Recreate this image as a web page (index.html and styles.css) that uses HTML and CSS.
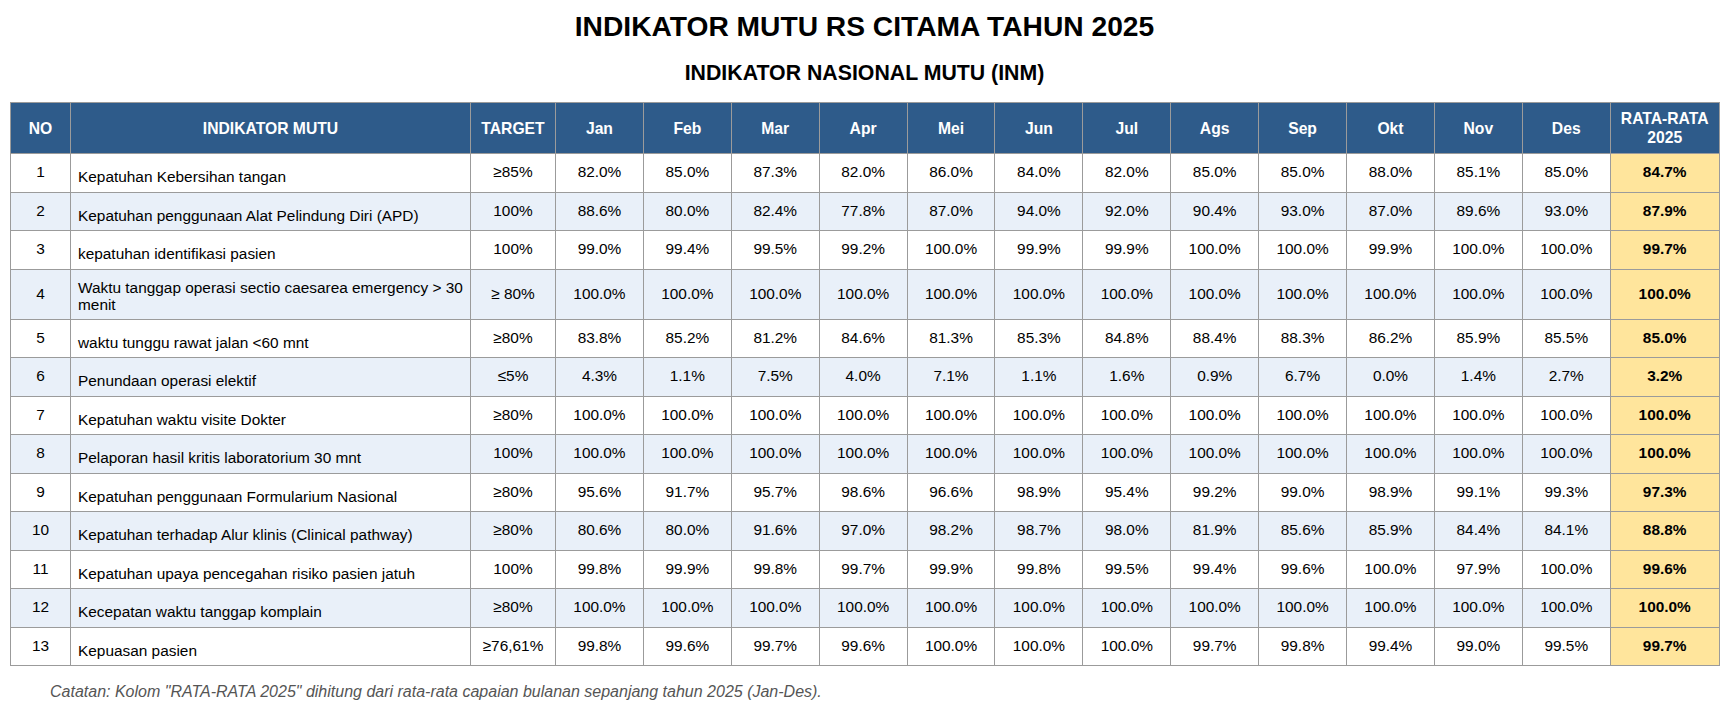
FILE: index.html
```html
<!DOCTYPE html>
<html lang="id">
<head>
<meta charset="utf-8">
<title>Indikator Mutu RS Citama Tahun 2025</title>
<link rel="stylesheet" href="styles.css">
</head>
<body>
<div class="page">
  <h1 class="title">INDIKATOR MUTU RS CITAMA TAHUN 2025</h1>
  <h2 class="subtitle">INDIKATOR NASIONAL MUTU (INM)</h2>
  <table class="grid">
    <colgroup>
      <col class="c-no"><col class="c-ind"><col class="c-tgt">
      <col class="c-m"><col class="c-m"><col class="c-m"><col class="c-m"><col class="c-m"><col class="c-m">
      <col class="c-m"><col class="c-m"><col class="c-m"><col class="c-m"><col class="c-m"><col class="c-m">
      <col class="c-avg">
    </colgroup>
    <thead>
      <tr>
        <th>NO</th><th>INDIKATOR MUTU</th><th>TARGET</th>
        <th>Jan</th><th>Feb</th><th>Mar</th><th>Apr</th><th>Mei</th><th>Jun</th>
        <th>Jul</th><th>Ags</th><th>Sep</th><th>Okt</th><th>Nov</th><th>Des</th>
        <th>RATA-RATA<br>2025</th>
      </tr>
    </thead>
    <tbody>
      <tr><td>1</td><td class="ind">Kepatuhan Kebersihan tangan</td><td>≥85%</td><td>82.0%</td><td>85.0%</td><td>87.3%</td><td>82.0%</td><td>86.0%</td><td>84.0%</td><td>82.0%</td><td>85.0%</td><td>85.0%</td><td>88.0%</td><td>85.1%</td><td>85.0%</td><td class="avg">84.7%</td></tr>
      <tr><td>2</td><td class="ind">Kepatuhan penggunaan Alat Pelindung Diri (APD)</td><td>100%</td><td>88.6%</td><td>80.0%</td><td>82.4%</td><td>77.8%</td><td>87.0%</td><td>94.0%</td><td>92.0%</td><td>90.4%</td><td>93.0%</td><td>87.0%</td><td>89.6%</td><td>93.0%</td><td class="avg">87.9%</td></tr>
      <tr><td>3</td><td class="ind">kepatuhan identifikasi pasien</td><td>100%</td><td>99.0%</td><td>99.4%</td><td>99.5%</td><td>99.2%</td><td>100.0%</td><td>99.9%</td><td>99.9%</td><td>100.0%</td><td>100.0%</td><td>99.9%</td><td>100.0%</td><td>100.0%</td><td class="avg">99.7%</td></tr>
      <tr class="tall"><td>4</td><td class="ind two">Waktu tanggap operasi sectio caesarea emergency &gt; 30<br>menit</td><td>≥ 80%</td><td>100.0%</td><td>100.0%</td><td>100.0%</td><td>100.0%</td><td>100.0%</td><td>100.0%</td><td>100.0%</td><td>100.0%</td><td>100.0%</td><td>100.0%</td><td>100.0%</td><td>100.0%</td><td class="avg">100.0%</td></tr>
      <tr><td>5</td><td class="ind">waktu tunggu rawat jalan &lt;60 mnt</td><td>≥80%</td><td>83.8%</td><td>85.2%</td><td>81.2%</td><td>84.6%</td><td>81.3%</td><td>85.3%</td><td>84.8%</td><td>88.4%</td><td>88.3%</td><td>86.2%</td><td>85.9%</td><td>85.5%</td><td class="avg">85.0%</td></tr>
      <tr><td>6</td><td class="ind">Penundaan operasi elektif</td><td>≤5%</td><td>4.3%</td><td>1.1%</td><td>7.5%</td><td>4.0%</td><td>7.1%</td><td>1.1%</td><td>1.6%</td><td>0.9%</td><td>6.7%</td><td>0.0%</td><td>1.4%</td><td>2.7%</td><td class="avg">3.2%</td></tr>
      <tr><td>7</td><td class="ind">Kepatuhan waktu visite Dokter</td><td>≥80%</td><td>100.0%</td><td>100.0%</td><td>100.0%</td><td>100.0%</td><td>100.0%</td><td>100.0%</td><td>100.0%</td><td>100.0%</td><td>100.0%</td><td>100.0%</td><td>100.0%</td><td>100.0%</td><td class="avg">100.0%</td></tr>
      <tr><td>8</td><td class="ind">Pelaporan hasil kritis laboratorium 30 mnt</td><td>100%</td><td>100.0%</td><td>100.0%</td><td>100.0%</td><td>100.0%</td><td>100.0%</td><td>100.0%</td><td>100.0%</td><td>100.0%</td><td>100.0%</td><td>100.0%</td><td>100.0%</td><td>100.0%</td><td class="avg">100.0%</td></tr>
      <tr><td>9</td><td class="ind">Kepatuhan penggunaan Formularium Nasional</td><td>≥80%</td><td>95.6%</td><td>91.7%</td><td>95.7%</td><td>98.6%</td><td>96.6%</td><td>98.9%</td><td>95.4%</td><td>99.2%</td><td>99.0%</td><td>98.9%</td><td>99.1%</td><td>99.3%</td><td class="avg">97.3%</td></tr>
      <tr><td>10</td><td class="ind">Kepatuhan terhadap Alur klinis (Clinical pathway)</td><td>≥80%</td><td>80.6%</td><td>80.0%</td><td>91.6%</td><td>97.0%</td><td>98.2%</td><td>98.7%</td><td>98.0%</td><td>81.9%</td><td>85.6%</td><td>85.9%</td><td>84.4%</td><td>84.1%</td><td class="avg">88.8%</td></tr>
      <tr><td>11</td><td class="ind">Kepatuhan upaya pencegahan risiko pasien jatuh</td><td>100%</td><td>99.8%</td><td>99.9%</td><td>99.8%</td><td>99.7%</td><td>99.9%</td><td>99.8%</td><td>99.5%</td><td>99.4%</td><td>99.6%</td><td>100.0%</td><td>97.9%</td><td>100.0%</td><td class="avg">99.6%</td></tr>
      <tr><td>12</td><td class="ind">Kecepatan waktu tanggap komplain</td><td>≥80%</td><td>100.0%</td><td>100.0%</td><td>100.0%</td><td>100.0%</td><td>100.0%</td><td>100.0%</td><td>100.0%</td><td>100.0%</td><td>100.0%</td><td>100.0%</td><td>100.0%</td><td>100.0%</td><td class="avg">100.0%</td></tr>
      <tr><td>13</td><td class="ind">Kepuasan pasien</td><td>≥76,61%</td><td>99.8%</td><td>99.6%</td><td>99.7%</td><td>99.6%</td><td>100.0%</td><td>100.0%</td><td>100.0%</td><td>99.7%</td><td>99.8%</td><td>99.4%</td><td>99.0%</td><td>99.5%</td><td class="avg">99.7%</td></tr>
    </tbody>
  </table>
  <p class="note">Catatan: Kolom "RATA-RATA 2025" dihitung dari rata-rata capaian bulanan sepanjang tahun 2025 (Jan-Des).</p>
</div>
</body>
</html>
```

FILE: styles.css
```css
html, body {
  margin: 0;
  padding: 0;
  background: #ffffff;
}

body {
  font-family: "Liberation Sans", Arial, sans-serif;
  color: #000;
}

.page {
  padding: 10px 12px 0 10px;
}

.title {
  margin: 0;
  font-size: 28.2px;
  line-height: 32px;
  font-weight: bold;
  text-align: center;
  color: #000;
}

.subtitle {
  margin: 19px 0 0;
  font-size: 21.3px;
  line-height: 24px;
  font-weight: bold;
  text-align: center;
  color: #000;
}

.grid {
  margin-top: 17px;
  width: 1709px;
  border-collapse: collapse;
  table-layout: fixed;
  font-size: 15.4px;
}

.c-no { width: 60px; }
.c-ind { width: 400px; }
.c-tgt { width: 85px; }
.c-m { width: 87.9px; }
.c-avg { width: 109px; }

.grid th,
.grid td {
  border: 1px solid #9b9b9b;
  padding: 0 4px;
  text-align: center;
  vertical-align: middle;
}

.grid thead tr {
  height: 51px;
}

.grid th {
  background: #2e5b8a;
  color: #ffffff;
  font-size: 15.7px;
  font-weight: bold;
  line-height: 19px;
}

.grid tbody tr {
  height: 38.5px;
}

.grid tbody tr.tall {
  height: 50px;
}

.grid tbody td {
  line-height: 17px;
  color: #000;
  padding-bottom: 2px;
}

.grid tbody tr:nth-child(even) td {
  background: #e9f0f9;
}

.grid td.ind {
  text-align: left;
  padding: 8px 6px 0 7px;
}

.grid td.ind.two {
  padding-top: 4px;
  white-space: nowrap;
}

.grid tbody tr td.avg,
.grid tbody tr:nth-child(even) td.avg {
  background: #ffe59c;
  font-weight: bold;
}

.note {
  margin: 17px 0 0 40px;
  font-size: 16px;
  line-height: 18px;
  font-style: italic;
  color: #555555;
}
```
